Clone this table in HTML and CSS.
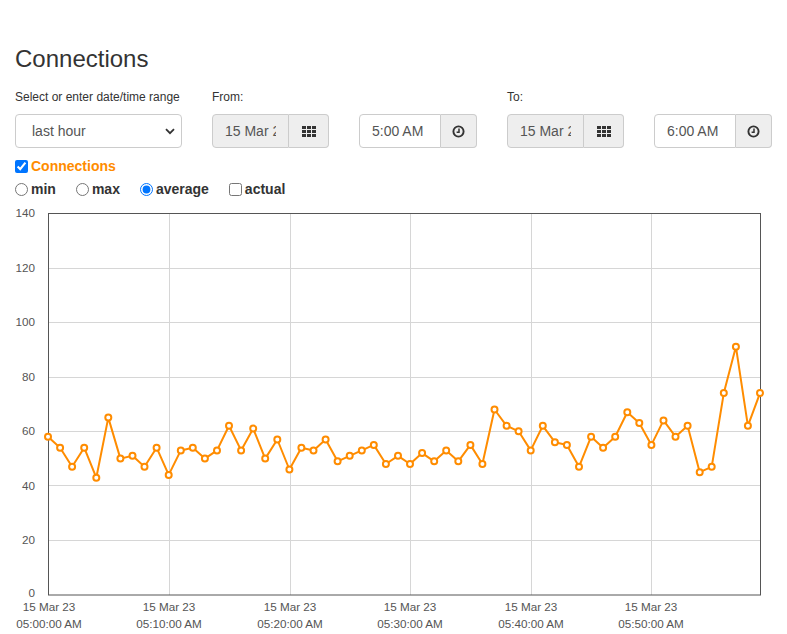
FILE: index.html
```html
<!DOCTYPE html>
<html lang="en">
<head>
<meta charset="utf-8">
<title>Connections</title>
<link rel="stylesheet" href="styles.css">
</head>
<body>
<div class="page">
  <h1 class="title">Connections</h1>
  <div class="controls">
    <div class="col">
      <div class="field-label">Select or enter date/time range</div>
      <div class="select-wrap">
        <select class="range-select">
          <option>last hour</option>
        </select>
        <svg class="chevron" width="10" height="7" viewBox="0 0 10 7"><path d="M1 1.2 L5 5.2 L9 1.2" fill="none" stroke="#333" stroke-width="1.8"/></svg>
      </div>
    </div>
    <div class="col">
      <div class="field-label">From:</div>
      <div class="input-group">
        <input class="date-input" type="text" value="15 Mar 2023" readonly>
        <span class="addon"><svg width="14" height="11" viewBox="0 0 14 11"><g fill="#333"><rect x="0" y="0" width="4" height="3"/><rect x="5" y="0" width="4" height="3"/><rect x="10" y="0" width="4" height="3"/><rect x="0" y="4" width="4" height="3"/><rect x="5" y="4" width="4" height="3"/><rect x="10" y="4" width="4" height="3"/><rect x="0" y="8" width="4" height="3"/><rect x="5" y="8" width="4" height="3"/><rect x="10" y="8" width="4" height="3"/></g></svg></span>
      </div>
    </div>
    <div class="col">
      <div class="field-label"></div>
      <div class="input-group">
        <input class="time-input" type="text" value="5:00 AM">
        <span class="addon"><svg width="13" height="13" viewBox="0 0 13 13"><circle cx="6.5" cy="6.5" r="5.1" fill="none" stroke="#333" stroke-width="1.9"/><path d="M7 3.5 V7.2 H4.6" fill="none" stroke="#333" stroke-width="1.5"/></svg></span>
      </div>
    </div>
    <div class="col">
      <div class="field-label">To:</div>
      <div class="input-group">
        <input class="date-input" type="text" value="15 Mar 2023" readonly>
        <span class="addon"><svg width="14" height="11" viewBox="0 0 14 11"><g fill="#333"><rect x="0" y="0" width="4" height="3"/><rect x="5" y="0" width="4" height="3"/><rect x="10" y="0" width="4" height="3"/><rect x="0" y="4" width="4" height="3"/><rect x="5" y="4" width="4" height="3"/><rect x="10" y="4" width="4" height="3"/><rect x="0" y="8" width="4" height="3"/><rect x="5" y="8" width="4" height="3"/><rect x="10" y="8" width="4" height="3"/></g></svg></span>
      </div>
    </div>
    <div class="col">
      <div class="field-label"></div>
      <div class="input-group">
        <input class="time-input" type="text" value="6:00 AM">
        <span class="addon"><svg width="13" height="13" viewBox="0 0 13 13"><circle cx="6.5" cy="6.5" r="5.1" fill="none" stroke="#333" stroke-width="1.9"/><path d="M7 3.5 V7.2 H4.6" fill="none" stroke="#333" stroke-width="1.5"/></svg></span>
      </div>
    </div>
  </div>
  <div class="series">
    <label class="opt"><input type="checkbox" checked>Connections</label>
  </div>
  <div class="modes">
    <label class="opt"><input type="radio" name="mode">min</label>
    <label class="opt"><input type="radio" name="mode">max</label>
    <label class="opt"><input type="radio" name="mode" checked>average</label>
    <label class="opt"><input type="checkbox">actual</label>
  </div>
</div>
<svg class="chart" width="787" height="435" viewBox="0 199 787 435">
  <g class="grid" stroke="#d6d6d6" stroke-width="1">
    <line x1="48" y1="268.5" x2="760" y2="268.5"/>
    <line x1="48" y1="322.5" x2="760" y2="322.5"/>
    <line x1="48" y1="377.5" x2="760" y2="377.5"/>
    <line x1="48" y1="431.5" x2="760" y2="431.5"/>
    <line x1="48" y1="485.5" x2="760" y2="485.5"/>
    <line x1="48" y1="540.5" x2="760" y2="540.5"/>
    <line x1="169.5" y1="213" x2="169.5" y2="595"/>
    <line x1="290.5" y1="213" x2="290.5" y2="595"/>
    <line x1="410.5" y1="213" x2="410.5" y2="595"/>
    <line x1="531.5" y1="213" x2="531.5" y2="595"/>
    <line x1="651.5" y1="213" x2="651.5" y2="595"/>
  </g>
  <rect x="48.5" y="213.5" width="712" height="381.5" fill="none" stroke="#555" stroke-width="1"/>
  <g class="ylabels" font-family="Liberation Sans, Arial, sans-serif" font-size="11.7" fill="#555" text-anchor="end">
    <text x="35" y="217">140</text>
    <text x="35" y="272">120</text>
    <text x="35" y="326">100</text>
    <text x="35" y="381">80</text>
    <text x="35" y="435">60</text>
    <text x="35" y="490">40</text>
    <text x="35" y="544">20</text>
    <text x="35" y="597">0</text>
  </g>
  <g class="xlabels" font-family="Liberation Sans, Arial, sans-serif" font-size="11.7" fill="#555" text-anchor="middle">
    <text x="49" y="611">15 Mar 23</text><text x="49" y="628">05:00:00 AM</text>
    <text x="169" y="611">15 Mar 23</text><text x="169" y="628">05:10:00 AM</text>
    <text x="290" y="611">15 Mar 23</text><text x="290" y="628">05:20:00 AM</text>
    <text x="410" y="611">15 Mar 23</text><text x="410" y="628">05:30:00 AM</text>
    <text x="531" y="611">15 Mar 23</text><text x="531" y="628">05:40:00 AM</text>
    <text x="651" y="611">15 Mar 23</text><text x="651" y="628">05:50:00 AM</text>
  </g>
  <polyline fill="none" stroke="#ff8c00" stroke-width="2" stroke-linejoin="round" points="48,436.7 60.1,447.7 72.1,466.8 84.2,447.7 96.3,477.7 108.3,417.6 120.4,458.6 132.5,455.8 144.5,466.8 156.6,447.7 168.7,474.9 180.8,450.4 192.8,447.7 204.9,458.6 217,450.4 229,425.8 241.1,450.4 253.2,428.6 265.2,458.6 277.3,439.5 289.4,469.5 301.4,447.7 313.5,450.4 325.6,439.5 337.6,461.3 349.7,455.8 361.8,450.4 373.8,444.9 385.9,464 398,455.8 410,464 422.1,453.1 434.2,461.3 446.2,450.4 458.3,461.3 470.4,444.9 482.4,464 494.5,409.5 506.6,425.8 518.6,431.3 530.7,450.4 542.8,425.8 554.9,442.2 566.9,444.9 579,466.8 591.1,436.7 603.1,447.7 615.2,436.7 627.3,412.2 639.3,423.1 651.4,444.9 663.5,420.4 675.5,436.7 687.6,425.8 699.7,472.2 711.7,466.8 723.8,393.1 735.9,346.7 747.9,425.8 760,393.1"/>
  <g class="points" fill="#fff" stroke="#ff8c00" stroke-width="2">
    <circle cx="48" cy="436.7" r="3"/><circle cx="60.1" cy="447.7" r="3"/><circle cx="72.1" cy="466.8" r="3"/><circle cx="84.2" cy="447.7" r="3"/><circle cx="96.3" cy="477.7" r="3"/>
    <circle cx="108.3" cy="417.6" r="3"/><circle cx="120.4" cy="458.6" r="3"/><circle cx="132.5" cy="455.8" r="3"/><circle cx="144.5" cy="466.8" r="3"/><circle cx="156.6" cy="447.7" r="3"/>
    <circle cx="168.7" cy="474.9" r="3"/><circle cx="180.8" cy="450.4" r="3"/><circle cx="192.8" cy="447.7" r="3"/><circle cx="204.9" cy="458.6" r="3"/><circle cx="217" cy="450.4" r="3"/>
    <circle cx="229" cy="425.8" r="3"/><circle cx="241.1" cy="450.4" r="3"/><circle cx="253.2" cy="428.6" r="3"/><circle cx="265.2" cy="458.6" r="3"/><circle cx="277.3" cy="439.5" r="3"/>
    <circle cx="289.4" cy="469.5" r="3"/><circle cx="301.4" cy="447.7" r="3"/><circle cx="313.5" cy="450.4" r="3"/><circle cx="325.6" cy="439.5" r="3"/><circle cx="337.6" cy="461.3" r="3"/>
    <circle cx="349.7" cy="455.8" r="3"/><circle cx="361.8" cy="450.4" r="3"/><circle cx="373.8" cy="444.9" r="3"/><circle cx="385.9" cy="464" r="3"/><circle cx="398" cy="455.8" r="3"/>
    <circle cx="410" cy="464" r="3"/><circle cx="422.1" cy="453.1" r="3"/><circle cx="434.2" cy="461.3" r="3"/><circle cx="446.2" cy="450.4" r="3"/><circle cx="458.3" cy="461.3" r="3"/>
    <circle cx="470.4" cy="444.9" r="3"/><circle cx="482.4" cy="464" r="3"/><circle cx="494.5" cy="409.5" r="3"/><circle cx="506.6" cy="425.8" r="3"/><circle cx="518.6" cy="431.3" r="3"/>
    <circle cx="530.7" cy="450.4" r="3"/><circle cx="542.8" cy="425.8" r="3"/><circle cx="554.9" cy="442.2" r="3"/><circle cx="566.9" cy="444.9" r="3"/><circle cx="579" cy="466.8" r="3"/>
    <circle cx="591.1" cy="436.7" r="3"/><circle cx="603.1" cy="447.7" r="3"/><circle cx="615.2" cy="436.7" r="3"/><circle cx="627.3" cy="412.2" r="3"/><circle cx="639.3" cy="423.1" r="3"/>
    <circle cx="651.4" cy="444.9" r="3"/><circle cx="663.5" cy="420.4" r="3"/><circle cx="675.5" cy="436.7" r="3"/><circle cx="687.6" cy="425.8" r="3"/><circle cx="699.7" cy="472.2" r="3"/>
    <circle cx="711.7" cy="466.8" r="3"/><circle cx="723.8" cy="393.1" r="3"/><circle cx="735.9" cy="346.7" r="3"/><circle cx="747.9" cy="425.8" r="3"/><circle cx="760" cy="393.1" r="3"/>
  </g>
</svg>
</body>
</html>
```

FILE: styles.css
```css
* { box-sizing: border-box; }

html, body {
  margin: 0;
  padding: 0;
  background: #fff;
}

body {
  font-family: "Liberation Sans", Arial, Helvetica, sans-serif;
  color: #333;
  overflow: hidden;
}

.page {
  padding: 46px 15px 0;
}

.title {
  margin: 0 0 17px;
  font-size: 24px;
  line-height: 26px;
  font-weight: normal;
  color: #333;
}

.controls {
  display: grid;
  grid-template-columns: 167px 117px 118px 117px 118px;
  column-gap: 30px;
}

.field-label {
  font-size: 12px;
  line-height: 17px;
  height: 17px;
  margin-bottom: 8px;
  color: #333;
}

.select-wrap {
  position: relative;
  height: 34px;
}

.range-select {
  -webkit-appearance: none;
  appearance: none;
  width: 100%;
  height: 34px;
  margin: 0;
  border: 1px solid #ccc;
  border-radius: 4px;
  padding: 0 0 0 16px;
  background: #fff;
  font-family: "Liberation Sans", Arial, sans-serif;
  font-size: 14px;
  color: #555;
  outline: none;
}

.chevron {
  position: absolute;
  right: 7px;
  top: 14px;
  pointer-events: none;
}

.input-group {
  display: flex;
  height: 34px;
}

.input-group input {
  flex: none;
  height: 34px;
  margin: 0;
  border: 1px solid #ccc;
  border-radius: 4px 0 0 4px;
  padding: 0 12px;
  font-family: "Liberation Sans", Arial, sans-serif;
  font-size: 14px;
  color: #555;
  background: #fff;
  outline: none;
}

.date-input {
  width: 77px;
  background: #eee !important;
}

.time-input {
  width: 82px;
}

.addon {
  flex: 1;
  display: flex;
  align-items: center;
  justify-content: center;
  height: 34px;
  border: 1px solid #ccc;
  border-left: none;
  border-radius: 0 4px 4px 0;
  background: #eee;
}

.series {
  display: flex;
  align-items: center;
  height: 20px;
  margin-top: 8px;
  font-size: 14px;
  font-weight: bold;
  color: #ff8c00;
}

.modes {
  display: flex;
  align-items: center;
  height: 20px;
  margin-top: 3px;
  font-size: 14px;
  font-weight: bold;
  color: #333;
}

.opt {
  display: flex;
  align-items: center;
  margin-right: 20px;
}

.opt input {
  width: 13px;
  height: 13px;
  margin: 1px 3px 0 0;
}

.chart {
  display: block;
}
```
